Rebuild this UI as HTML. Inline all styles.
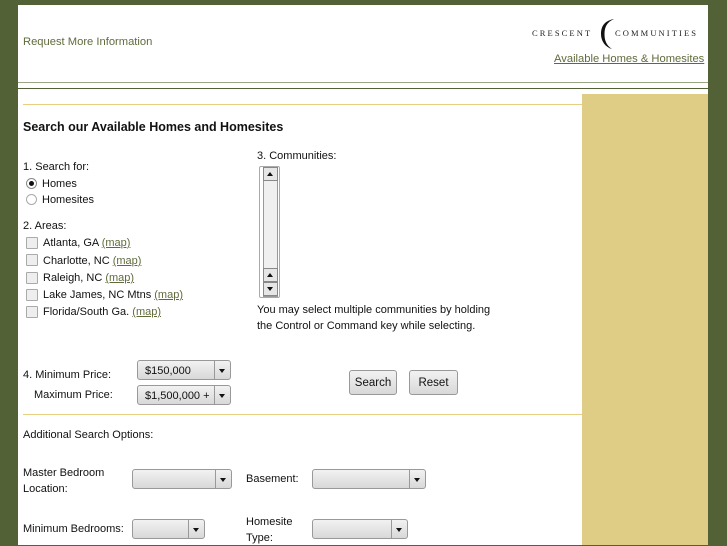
<!DOCTYPE html>
<html><head><style>
body{margin:0;width:727px;height:545px;background:#536236;position:relative;overflow:hidden;font-family:"Liberation Sans",sans-serif;font-size:11px;color:#111}
.a{position:absolute;white-space:nowrap}
.t{margin-top:1px}
.lk{color:#5f6b3c;text-decoration:underline}
.cb{position:absolute;width:10px;height:10px;border:1px solid #aaa;background:#eee;border-radius:1px}
.sel{position:absolute;height:20px;border:1px solid #999;border-radius:3px;background:linear-gradient(#f2f2f2,#d8d8d8);box-sizing:border-box}
.sel .ar{position:absolute;right:0;top:0;bottom:0;width:15px;border-left:1px solid #999}
.sel .ar:after{content:"";position:absolute;left:4px;top:8px;border-left:3.5px solid transparent;border-right:3.5px solid transparent;border-top:4px solid #111}
.sel span{position:absolute;left:7px;top:4px}
.btn{position:absolute;height:25px;border:1px solid #999;border-radius:3px;background:linear-gradient(#f2f2f2,#d8d8d8);box-sizing:border-box;text-align:center;line-height:24px;font-size:11.5px}
</style></head><body>
<div class="a" style="left:18px;top:5px;width:690px;height:540px;background:#fff"></div>
<div class="a" style="left:18px;top:82px;width:690px;height:1px;background:#9aa583"></div>
<div class="a" style="left:18px;top:88px;width:690px;height:1px;background:#536236"></div>
<div class="a" style="left:582px;top:94px;width:126px;height:451px;background:#dfcd85"></div>
<div class="a" style="left:23px;top:104px;width:559px;height:1px;background:#e6cf80"></div>
<div class="a" style="left:23px;top:414px;width:559px;height:1px;background:#e6cf80"></div>

<div class="a" style="left:23px;top:36px;color:#5f6b3c;font-size:11.2px">Request More Information</div>
<div class="a" style="left:532px;top:28px;font-family:'Liberation Serif',serif;font-size:8.5px;letter-spacing:2.1px;color:#222">CRESCENT</div>
<svg class="a" style="left:600px;top:18px" width="16" height="32" viewBox="0 0 16 32"><path d="M14 1 C3 3 1 10 1 16 C1 23 5 29 12 31 C6 27 4.5 22 4.5 16 C4.5 9 7 4 14 1 Z" fill="#111"/></svg>
<div class="a" style="left:615px;top:28px;font-family:'Liberation Serif',serif;font-size:8.5px;letter-spacing:2.1px;color:#222">COMMUNITIES</div>
<div class="a lk" style="left:554px;top:53px;font-size:11.2px">Available Homes &amp; Homesites</div>

<div class="a" style="left:23px;top:120px;font-weight:bold;font-size:12.5px">Search our Available Homes and Homesites</div>

<div class="a" style="left:23px;top:161px">1. Search for:</div>
<div class="a" style="left:26px;top:178px;width:9px;height:9px;border:1px solid #888;border-radius:50%;background:#fff"><div style="position:absolute;left:2px;top:2px;width:5px;height:5px;border-radius:50%;background:#111"></div></div>
<div class="a" style="left:42px;top:178px">Homes</div>
<div class="a" style="left:26px;top:194px;width:9px;height:9px;border:1px solid #aaa;border-radius:50%;background:#fff"></div>
<div class="a" style="left:42px;top:194px">Homesites</div>
<div class="a" style="left:23px;top:220px">2. Areas:</div>
<div class="cb" style="left:26px;top:237px"></div><div class="a" style="left:43px;top:237px">Atlanta, GA <span class="lk">(map)</span></div>
<div class="cb" style="left:26px;top:254px"></div><div class="a" style="left:43px;top:255px">Charlotte, NC <span class="lk">(map)</span></div>
<div class="cb" style="left:26px;top:272px"></div><div class="a" style="left:43px;top:272px">Raleigh, NC <span class="lk">(map) </span></div>
<div class="cb" style="left:26px;top:289px"></div><div class="a" style="left:43px;top:289px">Lake James, NC Mtns <span class="lk">(map)</span></div>
<div class="cb" style="left:26px;top:306px"></div><div class="a" style="left:43px;top:306px">Florida/South Ga. <span class="lk">(map)</span></div>

<div class="a" style="left:257px;top:150px">3. Communities:</div>
<div class="a" style="left:259px;top:166px;width:19px;height:130px;border:1px solid #aaa;border-radius:2px;background:#fff"></div>
<div class="a" style="left:263px;top:167px;width:13px;height:128px;border:1px solid #999;background:#f0f0f0"></div>
<div class="a" style="left:263px;top:167px;width:13px;height:12px;border:1px solid #888;background:#e6e6e6"></div>
<div class="a" style="left:263px;top:268px;width:13px;height:12px;border:1px solid #888;background:#e6e6e6"></div>
<div class="a" style="left:263px;top:282px;width:13px;height:12px;border:1px solid #888;background:#e6e6e6"></div>
<div class="a" style="left:267px;top:172px;border-left:3px solid transparent;border-right:3px solid transparent;border-bottom:4px solid #111"></div>
<div class="a" style="left:267px;top:273px;border-left:3px solid transparent;border-right:3px solid transparent;border-bottom:4px solid #111"></div>
<div class="a" style="left:267px;top:287px;border-left:3px solid transparent;border-right:3px solid transparent;border-top:4px solid #111"></div>
<div class="a" style="left:257px;top:302px;line-height:16px">You may select multiple communities by holding<br>the Control or Command key while selecting.</div>

<div class="a" style="left:23px;top:369px">4. Minimum Price:</div>
<div class="a" style="left:34px;top:389px">Maximum Price:</div>
<div class="sel" style="left:137px;top:360px;width:94px"><span>$150,000</span><div class="ar"></div></div>
<div class="sel" style="left:137px;top:385px;width:94px"><span>$1,500,000 +</span><div class="ar"></div></div>
<div class="btn" style="left:349px;top:370px;width:48px">Search</div>
<div class="btn" style="left:409px;top:370px;width:49px">Reset</div>

<div class="a" style="left:23px;top:429px">Additional Search Options:</div>
<div class="a" style="left:23px;top:465px;line-height:16px">Master Bedroom<br>Location:</div>
<div class="sel" style="left:132px;top:469px;width:100px"><div class="ar"></div></div>
<div class="a" style="left:246px;top:473px">Basement:</div>
<div class="sel" style="left:312px;top:469px;width:114px"><div class="ar"></div></div>
<div class="a" style="left:23px;top:523px">Minimum Bedrooms:</div>
<div class="sel" style="left:132px;top:519px;width:73px"><div class="ar"></div></div>
<div class="a" style="left:246px;top:514px;line-height:16px">Homesite<br>Type:</div>
<div class="sel" style="left:312px;top:519px;width:96px"><div class="ar"></div></div>
</body></html>
